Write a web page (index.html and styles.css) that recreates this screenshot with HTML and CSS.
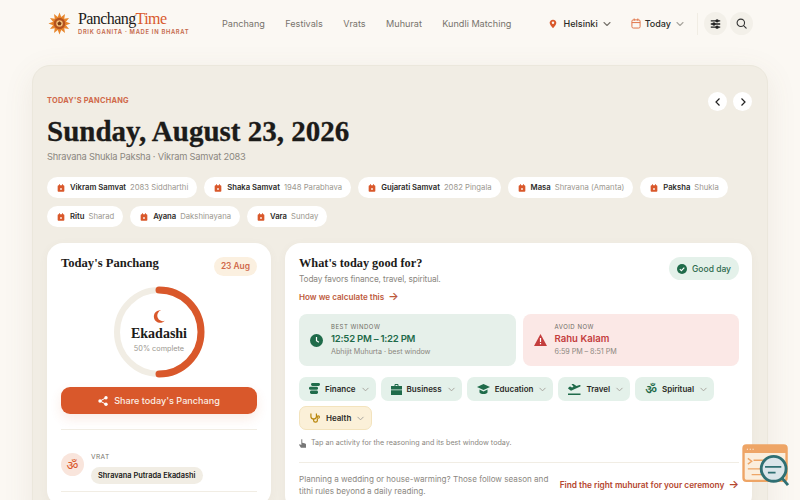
FILE: index.html
```html
<!DOCTYPE html>
<html lang="en">
<head>
  <meta charset="UTF-8" />
  <meta name="viewport" content="width=device-width, initial-scale=1" />
  <title>Panchang Time</title>
  <link rel="stylesheet" href="styles.css">
</head>
<body>
  <svg class="sprites" width="0" height="0" aria-hidden="true">
    <symbol id="cal" viewBox="0 0 12 12">
      <path d="M1 3.200C1 2.500 1.500 2 2.200 2H3V.3h1.400V2h3.200V.3H9V2h.8c.7 0 1.200.5 1.200 1.200v7.300c0 .7-.5 1.200-1.200 1.200H2.200C1.500 11.700 1 11.200 1 10.500z" fill="#d9582b"/>
      <rect x="4.700" y="6.200" width="2.600" height="2.600" rx=".4" fill="#fff"/>
    </symbol>
    <symbol id="chev" viewBox="0 0 10 10">
      <path d="M2 3.500 5 6.500 8 3.500" fill="none" stroke="currentColor" stroke-width="1.100" stroke-linecap="round" stroke-linejoin="round"/>
    </symbol>
  </svg>

  <!-- top nav -->
  <header class="topbar">
    <a class="logo" href="#">
      <svg class="logo-sun" width="23" height="23" viewBox="0 0 24 24">
        <polygon points="12,.5 13.810,5.240 17.750,2.040 16.950,7.050 21.960,6.250 18.760,10.190 23.500,12 18.760,13.810 21.960,17.750 16.950,16.950 17.750,21.960 13.810,18.760 12,23.500 10.190,18.760 6.250,21.960 7.050,16.950 2.040,17.750 5.240,13.810 .5,12 5.240,10.190 2.040,6.250 7.050,7.050 6.250,2.040 10.190,5.240" fill="#e8862d"/>
        <circle cx="12" cy="12" r="6" fill="#b5531f"/>
        <circle cx="12" cy="12" r="3.400" fill="#f4c27a"/>
        <path d="M9.800 11.500 12 9.600l2.200 1.900-.9 2.300h-2.600z" fill="#7c3a16"/>
      </svg>
      <span class="logo-text">
        <span class="logo-name">Panchang<em>Time</em></span>
        <span class="logo-tag">DRIK GANITA · MADE IN BHARAT</span>
      </span>
    </a>
    <nav class="mainnav">
      <a href="#">Panchang</a>
      <a href="#">Festivals</a>
      <a href="#">Vrats</a>
      <a href="#">Muhurat</a>
      <a href="#">Kundli Matching</a>
    </nav>
    <div class="tools">
      <button class="picker">
        <svg class="pin" width="8" height="10" viewBox="0 0 12 14"><path d="M6 .5C3 .5 1 2.700 1 5.300 1 8.500 6 13.500 6 13.500s5-5 5-8.200C11 2.700 9 .5 6 .5z" fill="#d9582b"/><circle cx="6" cy="5.200" r="1.800" fill="#fbf8f3"/></svg>
        Helsinki
        <svg class="chev" width="10" height="10"><use href="#chev"/></svg>
      </button>
      <button class="picker picker-date">
        <svg width="10" height="11" viewBox="0 0 11 12" fill="none" stroke="#e0764a" stroke-width="1.100"><rect x="1" y="2" width="9" height="9" rx="1.500"/><path d="M1 5h9M3.500.5V3M7.500.5V3"/></svg>
        Today
        <svg class="chev chev-light" width="10" height="10"><use href="#chev"/></svg>
      </button>
      <span class="tools-sep"></span>
      <button class="round-btn round-dark">
        <svg width="11" height="10" viewBox="0 0 14 12" fill="none" stroke="#222" stroke-width="1.700"><path d="M1 2h12M1 6h12M1 10h12"/><circle cx="9" cy="2" r="1.300" fill="#222"/><circle cx="5" cy="6" r="1.300" fill="#222"/><circle cx="9" cy="10" r="1.300" fill="#222"/></svg>
      </button>
      <button class="round-btn">
        <svg width="11" height="11" viewBox="0 0 13 13" fill="none" stroke="#333" stroke-width="1.300" stroke-linecap="round"><circle cx="5.700" cy="5.700" r="4.400"/><path d="M9 9 12 12"/></svg>
      </button>
    </div>
  </header>

  <main class="hero">
    <div class="hero-top">
      <div>
        <div class="eyebrow">TODAY'S PANCHANG</div>
        <h1>Sunday, August 23, 2026</h1>
        <p class="hero-sub">Shravana Shukla Paksha · Vikram Samvat 2083</p>
      </div>
      <div class="day-arrows">
        <button><svg width="10" height="10" viewBox="0 0 10 10"><path d="M6.500 1.500 3 5l3.500 3.500" fill="none" stroke="#222" stroke-width="1.200"/></svg></button>
        <button><svg width="10" height="10" viewBox="0 0 10 10"><path d="M3.500 1.500 7 5 3.500 8.500" fill="none" stroke="#222" stroke-width="1.200"/></svg></button>
      </div>
    </div>

    <div class="chips">
      <span class="chip"><svg width="8" height="8"><use href="#cal"/></svg><b>Vikram Samvat</b>2083 Siddharthi</span>
      <span class="chip"><svg width="8" height="8"><use href="#cal"/></svg><b>Shaka Samvat</b>1948 Parabhava</span>
      <span class="chip"><svg width="8" height="8"><use href="#cal"/></svg><b>Gujarati Samvat</b>2082 Pingala</span>
      <span class="chip"><svg width="8" height="8"><use href="#cal"/></svg><b>Masa</b>Shravana (Amanta)</span>
      <span class="chip"><svg width="8" height="8"><use href="#cal"/></svg><b>Paksha</b>Shukla</span>
      <span class="chip"><svg width="8" height="8"><use href="#cal"/></svg><b>Ritu</b>Sharad</span>
      <span class="chip"><svg width="8" height="8"><use href="#cal"/></svg><b>Ayana</b>Dakshinayana</span>
      <span class="chip"><svg width="8" height="8"><use href="#cal"/></svg><b>Vara</b>Sunday</span>
    </div>

    <div class="columns">
      <section class="card card-left">
        <div class="left-head">
          <h2>Today's Panchang</h2>
          <span class="date-pill">23 Aug</span>
        </div>
        <div class="dial">
          <svg class="dial-ring" width="92" height="92" viewBox="0 0 92 92">
            <circle cx="46" cy="46" r="42" fill="none" stroke="#f1ede4" stroke-width="6"/>
            <path d="M46 4a42 42 0 0 1 0 84" fill="none" stroke="#d9582b" stroke-width="7" stroke-linecap="round"/>
          </svg>
          <div class="dial-text">
            <svg width="12" height="13" viewBox="0 0 12 13"><path d="M8 .3A6.300 6.300 0 1 0 11.800 10.800 5 5 0 0 1 8 .3z" fill="#d9582b"/></svg>
            <strong>Ekadashi</strong>
            <small>50% complete</small>
          </div>
        </div>
        <button class="share">
          <svg width="10" height="10" viewBox="0 0 10 10" fill="#fff"><circle cx="8" cy="1.800" r="1.700"/><circle cx="8" cy="8.200" r="1.700"/><circle cx="2" cy="5" r="1.700"/><path d="M2 5l6-3.200M2 5l6 3.200" stroke="#fff"/></svg>
          Share today's Panchang
        </button>
        <div class="vrat">
          <span class="vrat-icon">ॐ</span>
          <div>
            <div class="vrat-label">VRAT</div>
            <span class="vrat-pill">Shravana Putrada Ekadashi</span>
          </div>
        </div>
      </section>

      <section class="card card-right">
        <div class="right-head">
          <div>
            <h2>What's today good for?</h2>
            <p class="favors">Today favors finance, travel, spiritual.</p>
            <a class="how" href="#">How we calculate this <span>→</span></a>
          </div>
          <span class="good-day">
            <svg width="10" height="10" viewBox="0 0 10 10"><circle cx="5" cy="5" r="5" fill="#1f6b4a"/><path d="M2.800 5.200 4.400 6.700 7.300 3.700" fill="none" stroke="#fff" stroke-width="1.100"/></svg>
            Good day
          </span>
        </div>

        <div class="windows">
          <div class="window window-best">
            <svg width="13" height="13" viewBox="0 0 13 13"><circle cx="6.500" cy="6.500" r="6.500" fill="#1f6b4a"/><path d="M6.500 3v3.700l2.400 1.500" fill="none" stroke="#fff" stroke-width="1.200"/></svg>
            <div>
              <div class="window-label">BEST WINDOW</div>
              <div class="window-time">12:52 PM – 1:22 PM</div>
              <div class="window-note">Abhijit Muhurta · best window</div>
            </div>
          </div>
          <div class="window window-avoid">
            <svg width="13" height="12" viewBox="0 0 13 12"><path d="M6.500 0 13 12H0z" fill="#c43d3d"/><path d="M6.500 4v4M6.500 9v1.300" stroke="#fff" stroke-width="1.200"/></svg>
            <div>
              <div class="window-label">AVOID NOW</div>
              <div class="window-time">Rahu Kalam</div>
              <div class="window-note">6:59 PM – 8:51 PM</div>
            </div>
          </div>
        </div>

        <div class="activities">
          <button class="activity">
            <svg width="11" height="12" viewBox="0 0 11 12" fill="#1f6b4a"><rect x="2" y="0" width="9" height="3" rx="1.400"/><rect x="0" y="3.800" width="9" height="3" rx="1.400"/><rect x="1" y="7.600" width="8" height="3.400" rx="1.400"/></svg>
            Finance<svg class="chev chev-light" width="9" height="9"><use href="#chev"/></svg>
          </button>
          <button class="activity">
            <svg width="11" height="11" viewBox="0 0 11 11" fill="#1f6b4a"><path d="M3.500 2V1c0-.5.500-1 1-1h2c.5 0 1 .5 1 1v1H11v3.500H0V2zM4.500 1v1h2V1zM0 6.300h11V11H0z"/></svg>
            Business<svg class="chev chev-light" width="9" height="9"><use href="#chev"/></svg>
          </button>
          <button class="activity">
            <svg width="13" height="11" viewBox="0 0 13 11" fill="#1f6b4a"><path d="M6.500 0 13 3 6.500 6 0 3z"/><path d="M2.500 5.500 6.500 7.500 10.500 5.500V8.500C9 10.500 4 10.500 2.500 8.500z"/></svg>
            Education<svg class="chev chev-light" width="9" height="9"><use href="#chev"/></svg>
          </button>
          <button class="activity">
            <svg width="13" height="11" viewBox="0 0 13 11" fill="#1f6b4a"><path d="M0 9.500h12.500V11H0zM1 3l1.200-.6L4 3.500 5.500 2.800 3.500 0l1.600-.2L8.500 2l3-1c1-.2 1.500.8.800 1.400L3 6.800 0 4.500z"/></svg>
            Travel<svg class="chev chev-light" width="9" height="9"><use href="#chev"/></svg>
          </button>
          <button class="activity">
            <span class="activity-om">ॐ</span>
            Spiritual<svg class="chev chev-light" width="9" height="9"><use href="#chev"/></svg>
          </button>
          <button class="activity activity-health">
            <svg width="11" height="12" viewBox="0 0 12 12" fill="none" stroke="#b8860b" stroke-width="1.300"><path d="M1 1v3c0 2 1.500 3 3 3s3-1 3-3V1"/><path d="M4 7v2c0 2 4 2 4 0V6.500"/><circle cx="9" cy="5" r="1.300"/></svg>
            Health<svg class="chev chev-light" width="9" height="9"><use href="#chev"/></svg>
          </button>
        </div>

        <p class="tap-hint">
          <svg width="7" height="9" viewBox="0 0 9 11" fill="#777"><path d="M3 0h1.200v4.500L8 5.500c.6.200 1 .7 1 1.300V11H2.500L0 7l1-.6L3 7.500z"/></svg>
          Tap an activity for the reasoning and its best window today.
        </p>

        <div class="planning">
          <p>Planning a wedding or house-warming? Those follow season and tithi rules beyond a daily reading.</p>
          <a href="#">Find the right muhurat for your ceremony <span>→</span></a>
        </div>
      </section>
    </div>
  </main>

  <!-- floating helper badge -->
  <svg class="float-badge" width="48" height="44" viewBox="0 0 50 46" fill="none">
    <rect x="1.500" y="1.500" width="45" height="37" rx="3" fill="#fbeedd" stroke="#eea566" stroke-width="2.500"/>
    <path d="M1.500 4.500a3 3 0 0 1 3-3h39a3 3 0 0 1 3 3v5h-45z" fill="#eea566"/>
    <path d="M5 5.500h1M8 5.500h1M11 5.500h1" stroke="#fff" stroke-width="1.200"/>
    <path d="M6 15l4 3-4 3M12 17h12M6 26h18M10 32h14" stroke="#eea566" stroke-width="1.500"/>
    <circle cx="33" cy="26" r="13" fill="#dbe5ea" stroke="#2f6f73" stroke-width="3"/>
    <path d="M24 24h17M27 30h8" stroke="#2f6f73" stroke-width="1.800"/>
    <path d="M42 36l6 7" stroke="#2f6f73" stroke-width="3"/>
  </svg>
</body>
</html>
```

FILE: styles.css
```css
/* basic page setup */
html, body {
  height: 100%;
  overflow: hidden;
}

body {
  margin: 0;
  background-color: #fbf8f3;
  color: #1c1b19;
  font-family: Inter, "Noto Sans", sans-serif;
}

button {
  border: none;
  background: none;
  font-family: inherit;
  padding: 0;
  cursor: pointer;
}

a {
  text-decoration: none;
  color: inherit;
}

.sprites {
  position: absolute;
}

/* top nav */
.topbar {
  display: flex;
  align-items: center;
  height: 47px;
  padding: 0 47px 0 48px;
}

.logo {
  display: flex;
  align-items: center;
  gap: 7px;
  width: 174px;
  flex: none;
}

.logo-text {
  display: flex;
  flex-direction: column;
  padding-bottom: 3px;
}

.logo-name {
  font-family: "Liberation Serif", serif;
  font-size: 16px;
  letter-spacing: -0.58px;
}

.logo-name em {
  font-style: normal;
  color: #d9582b;
}

.logo-tag {
  font-size: 5.800px;
  font-weight: 600;
  letter-spacing: 0.7px;
  color: #c4674a;
}

.mainnav {
  display: flex;
  gap: 20.400px;
  font-size: 9.100px;
  color: #77736c;
}

.tools {
  display: flex;
  align-items: center;
  margin-left: auto;
}

.picker {
  display: flex;
  align-items: center;
  gap: 4px;
  font-size: 9px;
  font-weight: 500;
  color: #2b2a27;
  margin-right: 19px;
}

.pin {
  margin-right: 3px;
}

.picker-date {
  margin-right: 12px;
}

.chev {
  color: #77736c;
}

.chev-light {
  color: #a8a59e;
}

.tools-sep {
  width: 1px;
  height: 22px;
  background: #f1ede4;
  margin-right: 3px;
}

.round-btn {
  display: flex;
  align-items: center;
  justify-content: center;
  width: 23px;
  height: 23px;
  border-radius: 50%;
  background: #f3f0e9;
  margin-left: 3px;
}

/* big hero panel */
.hero {
  margin: 18px 32px 0;
  padding: 30px 15px 16px 14px;
  background: #f1ede4;
  border: 1px solid #ebe7dc;
  border-radius: 18px;
  box-shadow: 0 8px 30px rgba(120, 100, 70, 0.1);
}

.hero-top {
  display: flex;
  justify-content: space-between;
  align-items: flex-start;
}

.eyebrow {
  font-size: 7.400px;
  font-weight: 700;
  letter-spacing: 0.25px;
  color: #d0694a;
  line-height: 10px;
}

h1 {
  margin: 8px 0 0;
  font-family: "Liberation Serif", serif;
  font-size: 29px;
  line-height: 34px;
  font-weight: 700;
  color: #1c1b19;
  -webkit-text-stroke: 0.3px #1c1b19;
}

.hero-sub {
  margin: 2px 0 0;
  font-size: 9.300px;
  line-height: 14px;
  letter-spacing: -0.2px;
  color: #8b877f;
}

.day-arrows {
  display: flex;
  gap: 6px;
  margin-top: -4px;
}

.day-arrows button {
  display: flex;
  align-items: center;
  justify-content: center;
  width: 19px;
  height: 19px;
  border-radius: 50%;
  background: #fff;
}

/* samvat chips */
.chips {
  display: flex;
  flex-wrap: wrap;
  gap: 8px 7px;
  margin-top: 13px;
}

.chip {
  display: flex;
  align-items: center;
  height: 21px;
  padding: 0 9px 0 10px;
  background: #fff;
  border-radius: 11px;
  font-size: 7.700px;
  color: #9b978f;
}

.chip svg {
  margin-right: 5px;
}

.chip b {
  font-weight: 600;
  color: #2b2a27;
  margin-right: 4px;
}

/* two columns of white cards */
.columns {
  display: flex;
  gap: 14px;
  margin-top: 16px;
  align-items: flex-start;
}

.card {
  background: #fff;
  border-radius: 16px;
  padding: 12px 14px 14px;
  box-shadow: 0 2px 10px rgba(120, 100, 70, 0.05);
}

.card-left {
  width: 224px;
  flex: none;
  box-sizing: border-box;
}

.card-right {
  flex: 1;
  min-width: 0;
  padding-right: 13px;
}

h2 {
  margin: 0;
  font-family: "Liberation Serif", serif;
  font-size: 12.600px;
  font-weight: 700;
  line-height: 16px;
}

.card-right h2 {
  font-size: 12.300px;
}

.left-head {
  display: flex;
  justify-content: space-between;
  align-items: flex-start;
}

.date-pill {
  padding: 0 7px;
  height: 19px;
  line-height: 19px;
  margin-top: 2px;
  border-radius: 10px;
  background: #fbf0e0;
  color: #d0694a;
  font-size: 8.400px;
  font-weight: 600;
}

.dial {
  position: relative;
  display: flex;
  align-items: center;
  justify-content: center;
  width: 92px;
  height: 92px;
  margin: 10px auto 9px;
}

.dial-ring {
  position: absolute;
  top: 0;
  left: 0;
}

.dial-text {
  display: flex;
  flex-direction: column;
  align-items: center;
}

.dial-text strong {
  font-family: "Liberation Serif", serif;
  font-size: 14px;
  line-height: 17px;
  margin-top: 2px;
}

.dial-text small {
  font-size: 7.300px;
  color: #9b978f;
  line-height: 12px;
  margin-top: 1px;
}

.share {
  display: flex;
  align-items: center;
  justify-content: center;
  gap: 6px;
  width: 100%;
  height: 27px;
  border-radius: 9px;
  background: #d9582b;
  color: #fbeee6;
  font-size: 9.100px;
  font-weight: 500;
  box-shadow: 0 5px 12px rgba(217, 88, 43, 0.12);
}

.vrat {
  display: flex;
  gap: 7px;
  margin-top: 15px;
  padding: 23px 0 7px;
  border-top: 1px solid #f1ede4;
  border-bottom: 1px solid #f1ede4;
}

.vrat-icon {
  display: flex;
  align-items: center;
  justify-content: center;
  width: 23px;
  height: 23px;
  border-radius: 50%;
  background: #f9e5dc;
  color: #d9582b;
  font-size: 13px;
  flex: none;
}

.vrat-label {
  font-size: 6.600px;
  letter-spacing: 0.4px;
  color: #77736c;
  line-height: 9px;
}

.vrat-pill {
  display: inline-block;
  margin-top: 4px;
  padding: 0 7px;
  height: 17px;
  line-height: 17px;
  border-radius: 9px;
  background: #f1ede4;
  font-size: 7.400px;
  font-weight: 600;
}

/* right card */
.right-head {
  display: flex;
  justify-content: space-between;
  align-items: flex-start;
}

.favors {
  margin: 2px 0 0;
  font-size: 8.300px;
  line-height: 13px;
  letter-spacing: -0.13px;
  color: #8b877f;
}

.how {
  display: block;
  margin-top: 5px;
  font-size: 8.100px;
  line-height: 12px;
  font-weight: 600;
  color: #bd5a3c;
}

.how span,
.planning a span {
  font-size: 11px;
  line-height: 10px;
  margin-left: 2px;
}

.good-day {
  display: flex;
  align-items: center;
  gap: 5px;
  height: 23px;
  margin-top: 2px;
  padding: 0 8px;
  border-radius: 12px;
  background: #e4f1ea;
  color: #2f6b50;
  font-size: 8.500px;
  font-weight: 500;
}

.windows {
  display: flex;
  gap: 7px;
  margin-top: 11px;
}

.window {
  flex: 1;
  display: flex;
  align-items: center;
  gap: 8px;
  height: 52px;
  padding: 0 11px;
  border-radius: 8px;
}

.window-best {
  background: #e6f0ea;
}

.window-avoid {
  background: #fbe8e6;
}

.window-label {
  font-size: 6px;
  letter-spacing: 0.5px;
  color: #6f6c65;
  line-height: 8px;
}

.window-time {
  font-size: 9.600px;
  font-weight: 600;
  line-height: 15px;
  color: #1f6b4a;
}

.window-best .window-time {
  letter-spacing: -0.25px;
}

.window-avoid .window-time {
  color: #c43d3d;
}

.window-note {
  font-size: 7.200px;
  line-height: 11px;
  letter-spacing: -0.05px;
  color: #8b877f;
}

.activities {
  display: flex;
  flex-wrap: wrap;
  gap: 5px;
  margin-top: 11px;
}

.activity {
  display: flex;
  align-items: center;
  gap: 5px;
  height: 24px;
  padding: 0 6px 0 10px;
  border-radius: 7px;
  background: #e4f1ea;
  font-size: 8px;
  font-weight: 600;
  color: #2b2a27;
}

.activity-om {
  color: #1f6b4a;
  font-size: 12px;
}

.activity-health {
  background: #fbf0d8;
  border: 1px solid #f3e3bd;
}

.tap-hint {
  display: flex;
  align-items: center;
  gap: 5px;
  margin: 7px 0 0;
  font-size: 7.150px;
  line-height: 12px;
  color: #8b877f;
}

.planning {
  display: flex;
  align-items: center;
  justify-content: space-between;
  gap: 10px;
  margin-top: 13px;
  padding-top: 10px;
  border-top: 1px solid #f1ede4;
}

.planning p {
  margin: 0;
  width: 252px;
  font-size: 8.100px;
  line-height: 12px;
  color: #8b877f;
}

.planning a {
  font-size: 8.300px;
  line-height: 12px;
  font-weight: 600;
  color: #b5472f;
  white-space: nowrap;
}

.float-badge {
  position: fixed;
  right: 10px;
  bottom: 12px;
}
```
